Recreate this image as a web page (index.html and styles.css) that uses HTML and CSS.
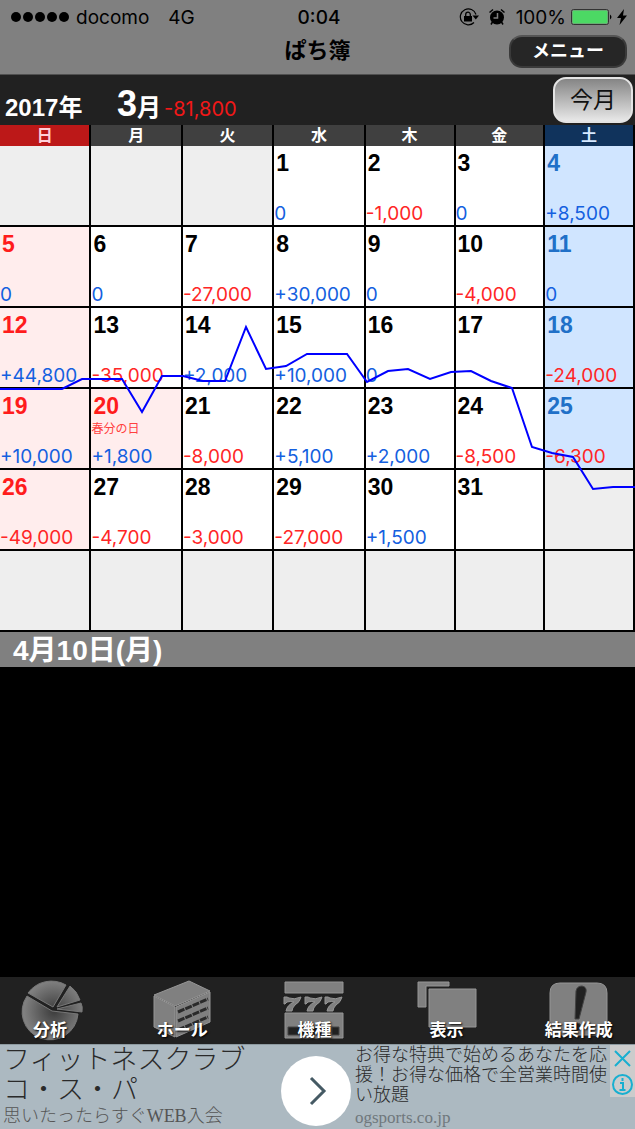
FILE: index.html
```html
<!DOCTYPE html>
<html lang="ja">
	<head>
		<meta charset="UTF-8">
		<meta name="viewport" content="width=device-width">
		<title>ぱち簿</title>
		<link rel="stylesheet" href="styles.css">
	</head>
	<body>
		<!--ステータスバーとナビ-->
		<header class="top">
			<div class="status">
				<div class="carrier">
					<span class="signal"><i></i><i></i><i></i><i></i><i></i></span>
					<span>docomo</span>
					<span class="net">4G</span>
				</div>
				<div class="clock">0:04</div>
				<div class="power">
					<svg class="lock" width="20" height="18" viewBox="0 0 20 18">
						<path d="M17 6.5A8 8 0 1 0 15 14.500" fill="none" stroke="#000" stroke-width="1.200"/>
						<path d="M13.500 7.500h6.500l-3.200 4z"/>
						<rect x="5" y="8" width="8" height="5.500"/>
						<path d="M6.700 8V6.500a2.300 2.300 0 0 1 4.600 0V8" fill="none" stroke="#000" stroke-width="1.300"/>
					</svg>
					<svg class="alarm" width="16" height="18" viewBox="0 0 16 18">
						<circle cx="8" cy="9.500" r="7"/>
						<path d="M.5 4.500L4 1.500M15.500 4.500L12 1.500M3.500 14L2 16.500M12.500 14l1.500 2.500" stroke="#000" stroke-width="1.500"/>
						<path d="M8.500 5v5H4.500" fill="none" stroke="#808080" stroke-width="1.500"/>
					</svg>
					<span class="percent">100%</span>
					<svg class="battery" width="42" height="17" viewBox="0 0 42 17">
						<rect x=".5" y=".5" width="37" height="15" rx="2" fill="none" stroke="#333"/>
						<rect x="1.500" y="1.500" width="35" height="13" rx="1" fill="#4cd964"/>
						<path d="M39 5.500q3 2.500 0 5z"/>
					</svg>
					<svg class="bolt" width="10" height="16" viewBox="0 0 10 16"><path d="M7 0L0 9h4L2.500 16 10 6.500H6z"/></svg>
				</div>
			</div>
			<div class="nav">
				<h1>ぱち簿</h1>
				<button class="menu" type="button">メニュー</button>
			</div>
		</header>

		<main>
			<div class="month">
				<span class="year">2017年</span>
				<span class="mon"><b>3</b>月</span>
				<span class="total">-81,800</span>
				<button class="today" type="button">今月</button>
			</div>

			<div class="calendar">
				<table>
					<colgroup>
						<col class="wide"><col class="wide"><col class="wide"><col class="wide"><col><col><col>
					</colgroup>
					<thead>
						<tr><th class="sun">日</th><th>月</th><th>火</th><th>水</th><th>木</th><th>金</th><th class="sat">土</th></tr>
					</thead>
					<tbody>
						<tr>
							<td class="none"></td>
							<td class="none"></td>
							<td class="none"></td>
							<td><div class="day"><b>1</b><span class="plus">0</span></div></td>
							<td><div class="day"><b>2</b><span class="minus">-1,000</span></div></td>
							<td><div class="day"><b>3</b><span class="plus">0</span></div></td>
							<td class="sat"><div class="day"><b>4</b><span class="plus">+8,500</span></div></td>
						</tr>
						<tr>
							<td class="sun"><div class="day"><b>5</b><span class="plus">0</span></div></td>
							<td><div class="day"><b>6</b><span class="plus">0</span></div></td>
							<td><div class="day"><b>7</b><span class="minus">-27,000</span></div></td>
							<td><div class="day"><b>8</b><span class="plus">+30,000</span></div></td>
							<td><div class="day"><b>9</b><span class="plus">0</span></div></td>
							<td><div class="day"><b>10</b><span class="minus">-4,000</span></div></td>
							<td class="sat"><div class="day"><b>11</b><span class="plus">0</span></div></td>
						</tr>
						<tr>
							<td class="sun"><div class="day"><b>12</b><span class="plus">+44,800</span></div></td>
							<td><div class="day"><b>13</b><span class="minus">-35,000</span></div></td>
							<td><div class="day"><b>14</b><span class="plus">+2,000</span></div></td>
							<td><div class="day"><b>15</b><span class="plus">+10,000</span></div></td>
							<td><div class="day"><b>16</b><span class="plus">0</span></div></td>
							<td><div class="day"><b>17</b></div></td>
							<td class="sat"><div class="day"><b>18</b><span class="minus">-24,000</span></div></td>
						</tr>
						<tr>
							<td class="sun"><div class="day"><b>19</b><span class="plus">+10,000</span></div></td>
							<td class="sun"><div class="day"><b>20</b><small>春分の日</small><span class="plus">+1,800</span></div></td>
							<td><div class="day"><b>21</b><span class="minus">-8,000</span></div></td>
							<td><div class="day"><b>22</b><span class="plus">+5,100</span></div></td>
							<td><div class="day"><b>23</b><span class="plus">+2,000</span></div></td>
							<td><div class="day"><b>24</b><span class="minus">-8,500</span></div></td>
							<td class="sat"><div class="day"><b>25</b><span class="minus">-6,300</span></div></td>
						</tr>
						<tr>
							<td class="sun"><div class="day"><b>26</b><span class="minus">-49,000</span></div></td>
							<td><div class="day"><b>27</b><span class="minus">-4,700</span></div></td>
							<td><div class="day"><b>28</b><span class="minus">-3,000</span></div></td>
							<td><div class="day"><b>29</b><span class="minus">-27,000</span></div></td>
							<td><div class="day"><b>30</b><span class="plus">+1,500</span></div></td>
							<td><div class="day"><b>31</b></div></td>
							<td class="none"></td>
						</tr>
						<tr>
							<td class="none"></td>
							<td class="none"></td>
							<td class="none"></td>
							<td class="none"></td>
							<td class="none"></td>
							<td class="none"></td>
							<td class="none"></td>
						</tr>
					</tbody>
				</table>
				<!--収支の折れ線-->
				<svg class="graph" viewBox="0 0 635 507" preserveAspectRatio="none">
					<polyline points="0,264 62,264 82,254 122,254 142,287 162,251 183,251 203,256 225,256 246,202 266,244 286,241 307,229 347,229 367,257 388,246 408,244 430,254 451,247 471,246 491,256 512,263 532,322 552,328 573,332 593,364 613,362 635,362"/>
				</svg>
			</div>

			<h2 class="date">4月10日(月)</h2>
			<div class="list"></div>
		</main>

		<!--下のタブ-->
		<nav class="tabs">
			<button type="button">
				<svg width="66" height="66" viewBox="0 0 66 66">
					<defs>
						<radialGradient id="pie" gradientUnits="userSpaceOnUse" cx="37" cy="34" r="30">
							<stop offset="0" stop-color="#3c3c3c"/>
							<stop offset="1" stop-color="#808080"/>
						</radialGradient>
					</defs>
					<g class="pie">
						<path d="M36 30L11 16A29 29 0 0 1 49 8z"/>
						<path d="M35 34L10 19A28 28 0 1 0 61 37z"/>
						<path d="M40 30L53 9Q60 14 63 23z"/>
						<path d="M40 32L64 26Q66 30 65 35z"/>
					</g>
				</svg>
				<span>分析</span>
			</button>
			<button type="button">
				<svg width="66" height="66" viewBox="0 0 66 66">
					<path d="M5 18L40 4 61 14 26 29z"/>
					<path d="M5 19L26 30V60L5 50z"/>
					<path d="M27 30L61 15V45L27 60z"/>
					<path class="dark" d="M29 35L59 22M29 44L59 31M29 53L59 40"/>
				</svg>
				<span>ホール</span>
			</button>
			<button type="button">
				<svg width="66" height="66" viewBox="0 0 66 66">
					<path d="M4 5H62V16H4zM4 36H62V61H4z"/>
					<path id="seven" d="M3 20h3l2 1q5 2 12-1-1 5-6 8-3 3-3 6H5q1-6 8-9-4-1-7 0l-2 2H3z"/>
					<use href="#seven" x="21"/>
					<use href="#seven" x="41"/>
					<path class="hole" d="M7 50h42v8H7zM51 50h7v8h-7z"/>
				</svg>
				<span>機種</span>
			</button>
			<button type="button">
				<svg width="66" height="66" viewBox="0 0 66 66">
					<path d="M4 5H35V9H12V30H4z"/>
					<path d="M15 12H62V50H15z"/>
				</svg>
				<span>表示</span>
			</button>
			<button type="button">
				<svg width="66" height="66" viewBox="0 0 66 66">
					<path d="M14 6H51Q61 6 61 16V58H4V16Q4 6 14 6z"/>
					<path class="hole" d="M30 14q1-5 6-5 5 1 4 6L33 42h-4z"/>
					<circle class="hole" cx="31" cy="50" r="4"/>
				</svg>
				<span>結果作成</span>
			</button>
		</nav>

		<!--広告-->
		<aside class="ad">
			<div class="ad-left">
				<p class="ad-title">フィットネスクラブ<br>コ・ス・パ</p>
				<p class="ad-sub">思いたったらすぐWEB入会</p>
			</div>
			<button class="go" type="button" aria-label="開く">
				<svg width="70" height="70" viewBox="0 0 70 70"><path d="M30 22L43 35 30 48"/></svg>
			</button>
			<div class="ad-right">
				<p class="ad-text">お得な特典で始めるあなたを応<br>援！お得な価格で全営業時間使<br>い放題</p>
				<a class="ad-url" href="#">ogsports.co.jp</a>
			</div>
			<div class="ad-ctrl">
				<button type="button" aria-label="閉じる"><svg width="25" height="25" viewBox="0 0 25 25"><path d="M5 5L20 20M20 5L5 20"/></svg></button>
				<button type="button" aria-label="情報"><svg width="25" height="25" viewBox="0 0 25 25"><circle cx="12.500" cy="12.500" r="9.500"/><path d="M10 11h3v7M9.500 18h6M12.500 6v3"/></svg></button>
			</div>
		</aside>
	</body>
</html>
```
FILE: styles.css
```css
*{
	margin: 0;
	padding: 0;
	box-sizing: border-box;
}

body{
	display: flex;
	flex-direction: column;
	min-height: 100vh;
	background-color: #000;
	font-family: "Liberation Sans", "Noto Sans CJK JP", sans-serif;
	overflow-x: hidden;
}

button{
	border: none;
	background: none;
	font-family: inherit;
}

svg{
	display: block;
}

/*上のバー*/
.top{
	background-color: #808080;
	border-bottom: 1px solid #505050;
}

.status, .nav{
	display: grid;
	grid-template-columns: 1fr auto 1fr;
	align-items: center;
}

.status{
	height: 34px;
	padding: 0 8px 0 11px;
	font-family: Inter, sans-serif;
	font-size: 19px;
}

.carrier, .power, .signal{
	display: flex;
	align-items: center;
}

.signal{
	gap: 2px;
	margin-right: 7px;
}

.signal i{
	width: 10px;
	height: 10px;
	border-radius: 50%;
	background-color: #000;
}

.net{
	margin-left: 19px;
}

.clock{
	font-weight: 500;
}

.power{
	justify-content: flex-end;
}

.alarm{
	margin: 0 11px 0 10px;
}

.battery{
	margin: 0 4px 0 5px;
}

.nav{
	height: 40px;
	padding: 0 8px 6px;
}

.nav h1{
	grid-column: 2;
	font-size: 22px;
	line-height: 32px;
}

.menu{
	justify-self: end;
	width: 118px;
	height: 33px;
	border: 2px solid #3a3a3a;
	border-top-color: #555;
	border-radius: 13px;
	background-color: #262626;
	color: #fff;
	font-size: 18px;
	font-weight: bold;
	line-height: 26px;
}

/*年月*/
.month{
	display: flex;
	align-items: baseline;
	height: 50px;
	padding: 2px 2px 0 5px;
	background-color: #212121;
	color: #fff;
	font-weight: bold;
	line-height: 54px;
}

.year{
	width: 112px;
	font-size: 24px;
}

.mon{
	margin-right: 3px;
	font-size: 24px;
}

.mon b{
	font-size: 36px;
}

.total{
	color: #f21818;
	font-family: Inter, sans-serif;
	font-size: 20px;
	font-weight: normal;
}

.today{
	align-self: flex-start;
	width: 80px;
	height: 46px;
	margin-left: auto;
	border: 2px solid #e4e4e4;
	border-radius: 13px;
	background: linear-gradient(#858585, #e8e8e8);
	color: #111;
	font-size: 23px;
	line-height: 40px;
}

/*カレンダー*/
.calendar{
	position: relative;
}

table{
	width: 100%;
	table-layout: fixed;
	border-collapse: separate;
	border-spacing: 0;
	background-color: #000;
}

.wide{
	width: 14.400%;
}

th{
	height: 21px;
	border-right: 2px solid #000;
	background-color: #404040;
	color: #fff;
	font-size: 16px;
	line-height: 21px;
}

th.sun{
	background-color: #bc1818;
	color: #ffd0d8;
}

th.sat{
	background-color: #10335c;
	color: #d5e8ff;
}

td{
	height: 81px;
	border-right: 2px solid #000;
	border-bottom: 2px solid #000;
	background-color: #fff;
	vertical-align: top;
}

td.none{
	background-color: #eee;
}

td.sun{
	background-color: #ffeded;
}

td.sat{
	background-color: #d0e5ff;
}

.day{
	display: flex;
	flex-direction: column;
	height: 79px;
	padding-top: 3px;
	white-space: nowrap;
}

.day b{
	padding-left: 2px;
	font-size: 23px;
	line-height: 28px;
}

.day small{
	color: #ff4040;
	font-size: 12px;
	line-height: 18px;
}

.day span{
	margin-top: auto;
	font-family: Inter, sans-serif;
	font-size: 19px;
	line-height: 22px;
}

.sun b{
	color: #ff1c1c;
}

.sat b{
	color: #2070c8;
}

.plus{
	color: #1460e0;
}

.minus{
	color: #ff2626;
}

/*カレンダーの上に重ねる*/
.graph{
	position: absolute;
	top: 0;
	left: 0;
	width: 100%;
	height: 100%;
	pointer-events: none;
}

.graph polyline{
	fill: none;
	stroke: #0000ff;
	stroke-width: 2;
}

.date{
	height: 35px;
	padding-left: 13px;
	background-color: #808080;
	color: #fff;
	font-size: 28px;
	line-height: 38px;
}

main{
	flex: 1;
}

/*タブ*/
.tabs{
	display: grid;
	grid-template-columns: repeat(5, 1fr);
	height: 67px;
	padding-left: 1px;
	margin-right: -27px;
	background-color: #212121;
}

.tabs button{
	display: grid;
	justify-items: start;
	padding-left: 16px;
}

.tabs svg, .tabs span{
	grid-area: 1 / 1;
}

.tabs path{
	fill: #808080;
	stroke: #969696;
}

.tabs .pie path{
	fill: url(#pie);
	stroke: #777;
}

.tabs .dark{
	stroke: #2a2a2a;
	stroke-width: 3;
	stroke-dasharray: 7 1;
}

.tabs .hole{
	fill: #212121;
	stroke: #444;
}

.tabs span{
	align-self: end;
	justify-self: start;
	display: flex;
	justify-content: center;
	width: 66px;
	color: #fff;
	font-size: 17px;
	font-weight: bold;
	line-height: 26px;
	text-shadow: 1px 1px 2px #000;
	white-space: nowrap;
}

/*広告*/
.ad{
	display: flex;
	position: relative;
	height: 85px;
	background-color: #acb9c1;
	border-top: 1px solid #8d9aa0;
	color: #2a2a2a;
	font-family: "Liberation Serif", "Noto Sans CJK JP", serif;
	white-space: nowrap;
	overflow: hidden;
}

.ad-left{
	width: 281px;
	padding-left: 3px;
}

.ad-title{
	font-size: 27px;
	font-weight: 300;
	line-height: 30px;
}

.ad-sub{
	color: #555;
	font-size: 18px;
	font-weight: 300;
	line-height: 22px;
}

.go{
	align-self: center;
	width: 70px;
	height: 70px;
	margin-top: 8px;
	border-radius: 50%;
	background-color: #fff;
}

.go path{
	fill: none;
	stroke: #455a64;
	stroke-width: 3;
}

.ad-right{
	flex: 1;
	padding-left: 4px;
}

.ad-text{
	font-size: 18px;
	font-weight: 300;
	line-height: 20px;
}

.ad-url{
	color: #70787d;
	font-size: 17px;
	line-height: 26px;
	text-decoration: none;
}

.ad-ctrl{
	position: absolute;
	top: 0;
	right: 0;
	background-color: #ccc;
}

.ad-ctrl button{
	display: block;
	height: 26px;
}

.ad-ctrl path, .ad-ctrl circle{
	fill: none;
	stroke: #18afd0;
	stroke-width: 2;
}
```
